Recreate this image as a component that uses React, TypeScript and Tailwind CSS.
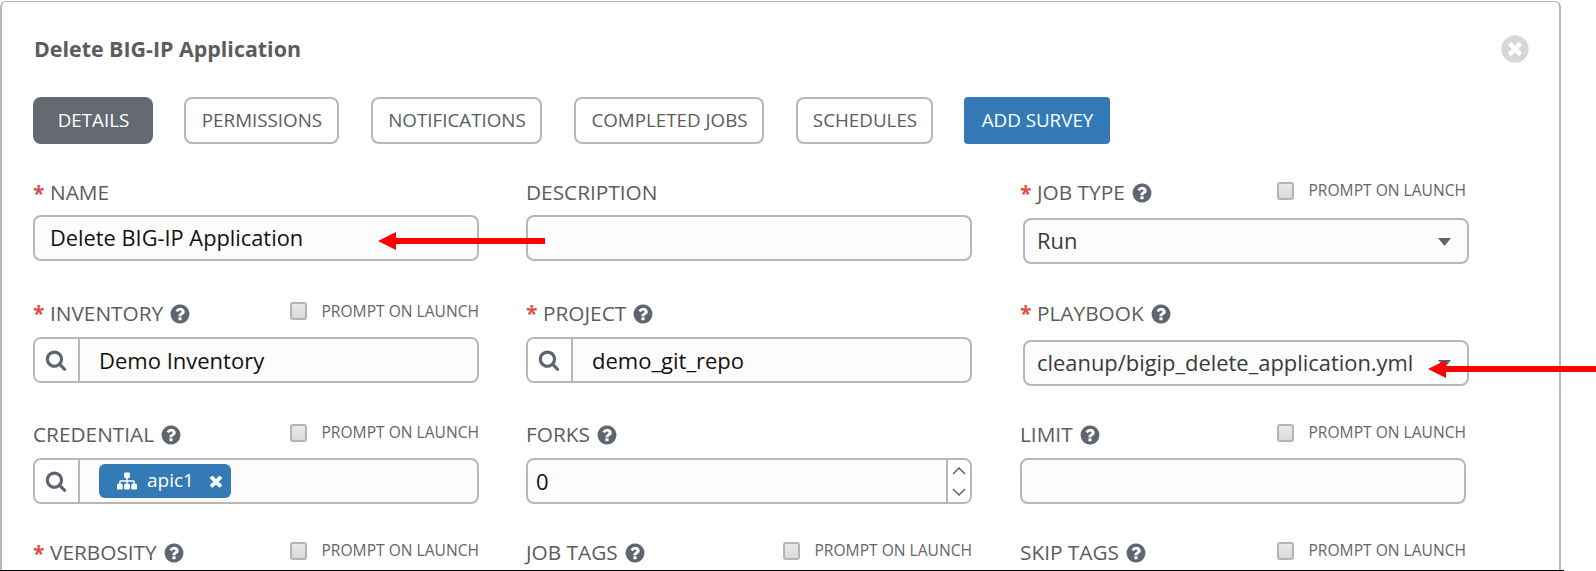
import type { ReactNode } from "react";

const CIRCLE =
  "m387-226q0 209-103 385.5t-279.5 279.5-385.5 103-385.5-103-279.5-279.5-103-385.5 103-385.5 279.5-279.5 385.5-103 385.5 103 279.5 279.5 103 385.5z";

const ICONS = {
  search:
    "M1216 832q0-185-131.5-316.5t-316.5-131.5-316.5 131.5-131.5 316.5 131.5 316.5 316.5 131.5 316.5-131.5 131.5-316.5zm512 832q0 52-38 90t-90 38q-54 0-90-38l-343-342q-179 124-399 124-143 0-273.5-55.5t-225-150-150-225-55.5-273.5 55.5-273.5 150-225 225-150 273.5-55.5 273.5 55.5 225 150 150 225 55.5 273.5q0 220-124 399l343 343q37 37 37 90z",
  help:
    "M1024 1376v-192q0-14-9-23t-23-9h-192q-14 0-23 9t-9 23v192q0 14 9 23t23 9h192q14 0 23-9t9-23zm256-672q0-88-55.5-163t-138.5-116-170-41q-243 0-371 213-15 24 8 42l132 100q7 6 19 6 16 0 25-12 53-68 86-92 34-24 86-24 48 0 85.5 26t37.5 59q0 38-20 61t-68 45q-63 28-115.5 86.5t-52.5 125.5v36q0 14 9 23t23 9h192q14 0 23-9t9-23q0-19 21.5-49.5t54.5-49.5q32-18 49-28.5t46-35 44.5-48 28-60.5 12.5-81zm384 192q0 209-103 385.5t-279.5 279.5-385.5 103-385.5-103-279.5-279.5-103-385.5 103-385.5 279.5-279.5 385.5-103 385.5 103 279.5 279.5 103 385.5z",
  close:
    "M1277 1122q0-26-19-45l-181-181 181-181q19-19 19-45 0-27-19-46l-90-90q-19-19-46-19-26 0-45 19l-181 181-181-181q-19-19-45-19-27 0-46 19l-90 90q-19 19-19 46 0 26 19 45l181 181-181 181q-19 19-19 45 0 27 19 46l90 90q19 19 46 19 26 0 45-19l181-181 181 181q19 19 45 19 27 0 46-19l90-90q19-19 19-46z" +
    CIRCLE,
  times:
    "M1490 1322q0 40-28 68l-136 136q-28 28-68 28t-68-28l-294-294-294 294q-28 28-68 28t-68-28l-136-136q-28-28-28-68t28-68l294-294-294-294q-28-28-28-68t28-68l136-136q28-28 68-28t68 28l294 294 294-294q28-28 68-28t68 28l136 136q28 28 28 68t-28 68l-294 294 294 294q28 28 28 68z",
  sitemap:
    "M1792 1248v320q0 40-28 68t-68 28h-320q-40 0-68-28t-28-68v-320q0-40 28-68t68-28h96v-192h-512v192h96q40 0 68 28t28 68v320q0 40-28 68t-68 28h-320q-40 0-68-28t-28-68v-320q0-40 28-68t68-28h96v-192h-512v192h96q40 0 68 28t28 68v320q0 40-28 68t-68 28h-320q-40 0-68-28t-28-68v-320q0-40 28-68t68-28h96v-192q0-52 38-90t90-38h512v-192h-96q-40 0-68-28t-28-68v-320q0-40 28-68t68-28h320q40 0 68 28t28 68v320q0 40-28 68t-68 28h-96v192h512q52 0 90 38t38 90v192h96q40 0 68 28t28 68z",
};

function Icon({ name, className }: { name: keyof typeof ICONS; className: string }) {
  return (
    <svg viewBox="0 0 1792 1792" fill="currentColor" className={`shrink-0 ${className}`}>
      <path d={ICONS[name]} />
    </svg>
  );
}

function Tab({ children, className }: { children: ReactNode; className: string }) {
  return (
    <button className={`flex h-[47px] items-center justify-center whitespace-nowrap pl-px text-[18.8px] ${className}`}>
      {children}
    </button>
  );
}

const outlined = "rounded-lg border-2 border-[#b7b7b7] bg-white text-[#5c5c5c]";

type FieldProps = {
  label: string;
  required?: boolean;
  help?: boolean;
  prompt?: boolean;
  lift?: string;
  children?: ReactNode;
};

function Field({ label, required, help, prompt, lift = "", children }: FieldProps) {
  return (
    <div className="flex w-[446px] flex-col">
      <div className={`flex h-[44px] shrink-0 items-center ${lift}`}>
        {required && <span className="w-[17px] text-[21px] font-bold leading-none text-[#d9534f]">*</span>}
        <span className="whitespace-nowrap text-[20.8px] text-[#5c5c5c]">{label}</span>
        {help && <Icon name="help" className="ml-[6px] size-[22px] text-[#5f6570]" />}
        {prompt && (
          <span className="mb-[4px] ml-auto flex items-center gap-[14px]">
            <span className="h-[18px] w-[17px] rounded-[3px] border-2 border-[#b4b4b4] bg-linear-to-b from-[#e9e9e9] to-[#d9d9d9]" />
            <span className="whitespace-nowrap text-[15.6px] text-[#666666]">PROMPT ON LAUNCH</span>
          </span>
        )}
      </div>
      {children}
    </div>
  );
}

const box = "flex h-[46px] shrink-0 overflow-hidden rounded-lg border-2 border-[#b7b7b7] bg-[#fcfcfc]";

function TextBox({ value = "" }: { value?: string }) {
  return (
    <div className={`${box} items-center pl-[15px] text-[21.8px] text-[#111111]`}>
      <span className="whitespace-nowrap">{value}</span>
    </div>
  );
}

function Lookup({ children }: { children: ReactNode }) {
  return (
    <div className={`${box} items-stretch text-[22px] text-[#111111]`}>
      <div className="flex w-[45px] items-center justify-center border-r-2 border-[#b7b7b7] bg-white pr-px">
        <Icon name="search" className="size-[22px] text-[#5f6570]" />
      </div>
      <div className="flex items-center whitespace-nowrap pl-[19px]">{children}</div>
    </div>
  );
}

function Select({ value }: { value: string }) {
  return (
    <div className={`${box} ml-[3px] mr-[-3px] mt-[3px] items-center justify-between pl-[12px] pr-[16px] text-[21.9px] text-[#3a3a3a]`}>
      <span className="whitespace-nowrap">{value}</span>
      <svg viewBox="0 0 13 8" className="mt-[2px] h-[8px] w-[13px]" fill="#5f6570">
        <path d="M0 0h13L6.500 8z" />
      </svg>
    </div>
  );
}

function Stepper() {
  return (
    <div className={`${box} items-stretch justify-between text-[22px] text-[#111111]`}>
      <span className="self-center pl-[8px]">0</span>
      <div className="flex w-[24px] flex-col items-center justify-center gap-[13px] border-l-2 border-[#b7b7b7] bg-white">
        <svg viewBox="0 0 14 8" className="h-[8px] w-[14px]" fill="none" stroke="#666" strokeWidth="1.500">
          <path d="M1 7l6-6 6 6" />
        </svg>
        <svg viewBox="0 0 14 8" className="h-[8px] w-[14px]" fill="none" stroke="#666" strokeWidth="1.500">
          <path d="M1 1l6 6 6-6" />
        </svg>
      </div>
    </div>
  );
}

function Arrow({ className, length }: { className: string; length: number }) {
  return (
    <svg className={`absolute ${className}`} width={length} height="18" fill="#ff0000">
      <path d={`M0 9L18 0V6H${length}V12H18V18z`} />
    </svg>
  );
}

export default function App() {
  return (
    <div className="relative h-[571px] w-[1596px] overflow-hidden bg-white font-['Open_Sans',sans-serif]">
      <div className="flex h-[571px] w-[1564px] flex-col border-b border-black pt-px">
        <main className="flex w-[1561px] grow flex-col rounded-t-md border-x-2 border-t border-[#b7b7b7] pl-[31px]">
          <header className="flex h-[95px] shrink-0 items-center justify-between pl-px pr-[28px]">
            <h1 className="text-[21.4px] font-bold text-[#5c5c5c]">Delete BIG-IP Application</h1>
            <Icon name="close" className="mb-px size-[32px] text-[#d7d7d7]" />
          </header>
          <nav className="flex h-[74px] shrink-0">
            <Tab className="w-[120px] rounded-lg bg-[#646972] pb-px text-white">DETAILS</Tab>
            <Tab className={`ml-[31px] w-[155px] pb-px ${outlined}`}>PERMISSIONS</Tab>
            <Tab className={`ml-[32px] w-[171px] pb-px ${outlined}`}>NOTIFICATIONS</Tab>
            <Tab className={`ml-[32px] w-[190px] pb-px ${outlined}`}>COMPLETED JOBS</Tab>
            <Tab className={`ml-[32px] w-[137px] pb-px ${outlined}`}>SCHEDULES</Tab>
            <Tab className="ml-[31px] w-[146px] rounded bg-[#337ab7] pb-px text-white">ADD SURVEY</Tab>
          </nav>
          <section className="grid grid-cols-[493px_494px_446px] grid-rows-[122px_121px_117px_39px] overflow-hidden">
            <Field label="NAME" required>
              <TextBox value="Delete BIG-IP Application" />
            </Field>
            <Field label="DESCRIPTION">
              <TextBox />
            </Field>
            <Field label="JOB TYPE" required help prompt>
              <Select value="Run" />
            </Field>
            <Field label="INVENTORY" required help prompt lift="pb-[3px]">
              <Lookup>Demo Inventory</Lookup>
            </Field>
            <Field label="PROJECT" required help lift="pb-[3px]">
              <Lookup>demo_git_repo</Lookup>
            </Field>
            <Field label="PLAYBOOK" required help lift="pb-[3px]">
              <Select value="cleanup/bigip_delete_application.yml" />
            </Field>
            <Field label="CREDENTIAL" help prompt lift="pb-[2px]">
              <Lookup>
                <span className="flex h-[34px] w-[132px] items-center rounded-md bg-[#337ab7] pl-[18px] text-[19px] text-white">
                  <Icon name="sitemap" className="size-[20px]" />
                  <span className="ml-[10px] w-[45px] pb-px">apic1</span>
                  <Icon name="times" className="ml-[15px] size-[18px]" />
                </span>
              </Lookup>
            </Field>
            <Field label="FORKS" help lift="pb-[2px]">
              <Stepper />
            </Field>
            <Field label="LIMIT" help prompt lift="pb-[2px]">
              <TextBox />
            </Field>
            <Field label="VERBOSITY" required help prompt />
            <Field label="JOB TAGS" help prompt />
            <Field label="SKIP TAGS" help prompt />
          </section>
        </main>
      </div>
      <Arrow className="left-[378px] top-[232px]" length={167} />
      <Arrow className="left-[1428px] top-[360px]" length={168} />
    </div>
  );
}
